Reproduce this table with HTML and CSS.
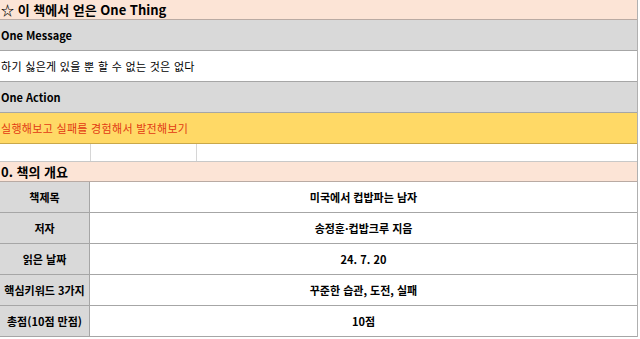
FILE: index.html
```html
<!DOCTYPE html>
<html lang="ko">
<head>
<meta charset="utf-8">
<link rel="stylesheet" href="styles.css">
</head>
<body>
<div class="sheet">
  <div class="row title peach">☆ 이 책에서 얻은 One Thing</div>
  <div class="row head gray">One Message</div>
  <div class="row plain">하기 싫은게 있을 뿐 할 수 없는 것은 없다</div>
  <div class="row head gray">One Action</div>
  <div class="row action">실행해보고 실패를 경험해서 발전해보기</div>
  <div class="row empty">
    <div class="cell c1"></div>
    <div class="cell c2"></div>
    <div class="cell c3"></div>
  </div>
  <div class="row title peach sec">0. 책의 개요</div>
  <div class="info">
    <div class="label">책제목</div><div class="value">미국에서 컵밥파는 남자</div>
    <div class="label">저자</div><div class="value">송정훈·컵밥크루 지음</div>
    <div class="label">읽은 날짜</div><div class="value">24. 7. 20</div>
    <div class="label">핵심키워드 3가지</div><div class="value">꾸준한 습관, 도전, 실패</div>
    <div class="label">총점(10점 만점)</div><div class="value">10점</div>
  </div>
</div>
</body>
</html>
```
FILE: styles.css
```css
html, body {
  margin: 0;
  padding: 0;
  background: #ffffff;
}
body {
  font-family: "Noto Sans CJK KR", "Noto Sans", sans-serif;
  color: #000;
}
.sheet {
  width: 637px;
  border-right: 1px solid #b0b0b0;
}
.row {
  display: flex;
  align-items: center;
  box-sizing: border-box;
  border-bottom: 1px solid #a6a6a6;
  padding-left: 1px;
  font-size: 11px;
  height: 31px;
}
.plain, .action { letter-spacing: 0.3px; }
.title {
  height: 20px;
  font-size: 13px;
  font-weight: bold;
  border-bottom: 1px solid #b9aaa3;
}
.peach { background: #fce4d6; }
.gray { background: #d9d9d9; }
.head { font-weight: bold; }
.plain { background: #fff; }
.action {
  background: #ffd966;
  color: #e23a12;
  border-bottom: 1px solid #c9a84a;
}
.empty {
  height: 18px;
  padding-left: 0;
  border-bottom: 1px solid #c8c8c8;
}
.empty .cell { height: 100%; }
.c1 { width: 90px; border-right: 1px solid #d6d6d6; }
.c2 { width: 105px; border-right: 1px solid #d6d6d6; }
.c3 { flex: 1; }
.sec { height: 20px; }
.info {
  display: grid;
  grid-template-columns: 90px 1fr;
}
.label, .value {
  height: 31px;
  box-sizing: border-box;
  border-bottom: 1px solid #a6a6a6;
  display: flex;
  align-items: center;
  justify-content: center;
  font-size: 11px;
  font-weight: bold;
}
.label {
  background: #d9d9d9;
  border-right: 1px solid #a6a6a6;
}
.value { background: #fff; }
```
